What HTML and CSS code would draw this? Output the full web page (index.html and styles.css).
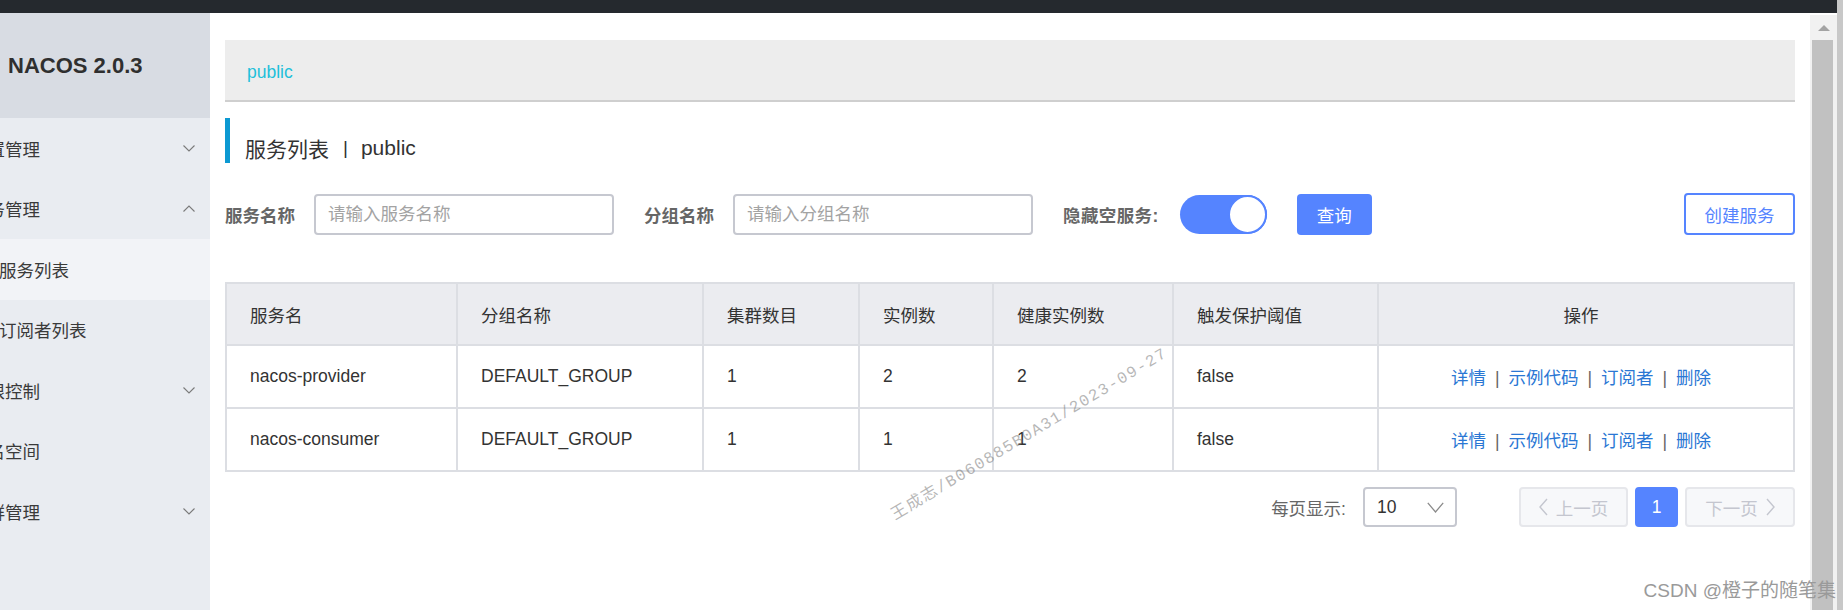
FILE: index.html
```html
<!DOCTYPE html>
<html lang="zh-CN">
<head>
<meta charset="utf-8">
<title>Nacos - 服务列表</title>
<link rel="stylesheet" href="styles.css">
</head>
<body>
<div class="window">
  <div class="topbar"></div>
  <div class="app">
    <aside class="sidebar">
      <div class="brand">NACOS 2.0.3</div>
      <nav class="menu">
        <div class="menu-item">
          <span class="menu-label">配置管理</span>
          <svg class="chev" width="12" height="7" viewBox="0 0 12 7"><polyline points="0.5,0.5 6,6 11.5,0.5"/></svg>
        </div>
        <div class="menu-item">
          <span class="menu-label">服务管理</span>
          <svg class="chev" width="12" height="7" viewBox="0 0 12 7"><polyline points="0.5,6.5 6,1 11.5,6.5"/></svg>
        </div>
        <div class="menu-item sub active">
          <span class="menu-label">服务列表</span>
        </div>
        <div class="menu-item sub">
          <span class="menu-label">订阅者列表</span>
        </div>
        <div class="menu-item">
          <span class="menu-label">权限控制</span>
          <svg class="chev" width="12" height="7" viewBox="0 0 12 7"><polyline points="0.5,0.5 6,6 11.5,0.5"/></svg>
        </div>
        <div class="menu-item">
          <span class="menu-label">命名空间</span>
        </div>
        <div class="menu-item">
          <span class="menu-label">集群管理</span>
          <svg class="chev" width="12" height="7" viewBox="0 0 12 7"><polyline points="0.5,0.5 6,6 11.5,0.5"/></svg>
        </div>
      </nav>
    </aside>

    <main class="main">
      <div class="crumb"><span class="crumb-ns">public</span></div>

      <h1 class="page-title">服务列表<span class="sep">|</span>public</h1>

      <div class="filters">
        <span class="f-label">服务名称</span>
        <input class="f-input" type="text" placeholder="请输入服务名称">
        <span class="f-label">分组名称</span>
        <input class="f-input" type="text" placeholder="请输入分组名称">
        <span class="f-label f-label-wide">隐藏空服务:</span>
        <div class="switch"><div class="knob"></div></div>
        <div class="btn-primary">查询</div>
        <div class="btn-outline">创建服务</div>
      </div>

      <table class="grid">
        <colgroup>
          <col class="c1"><col class="c2"><col class="c3"><col class="c4"><col class="c5"><col class="c6"><col class="c7">
        </colgroup>
        <thead>
          <tr>
            <th>服务名</th>
            <th>分组名称</th>
            <th>集群数目</th>
            <th>实例数</th>
            <th>健康实例数</th>
            <th>触发保护阈值</th>
            <th class="ops">操作</th>
          </tr>
        </thead>
        <tbody>
          <tr>
            <td>nacos-provider</td>
            <td>DEFAULT_GROUP</td>
            <td>1</td>
            <td>2</td>
            <td>2</td>
            <td>false</td>
            <td class="ops"><a class="op">详情</a><span class="bar">|</span><a class="op">示例代码</a><span class="bar">|</span><a class="op">订阅者</a><span class="bar">|</span><a class="op">删除</a></td>
          </tr>
          <tr>
            <td>nacos-consumer</td>
            <td>DEFAULT_GROUP</td>
            <td>1</td>
            <td>1</td>
            <td>1</td>
            <td>false</td>
            <td class="ops"><a class="op">详情</a><span class="bar">|</span><a class="op">示例代码</a><span class="bar">|</span><a class="op">订阅者</a><span class="bar">|</span><a class="op">删除</a></td>
          </tr>
        </tbody>
      </table>

      <div class="pager">
        <span class="pg-label">每页显示:</span>
        <div class="pg-select">
          <span>10</span>
          <svg class="pg-caret" width="17" height="11" viewBox="0 0 17 11"><polyline points="0.8,0.8 8.5,10 16.2,0.8"/></svg>
        </div>
        <div class="pg-btn pg-prev">
          <svg class="pg-arrow" width="9" height="18" viewBox="0 0 9 18"><polyline points="8,1 1,9 8,17"/></svg>
          <span>上一页</span>
        </div>
        <div class="pg-btn pg-cur">1</div>
        <div class="pg-btn pg-next">
          <span>下一页</span>
          <svg class="pg-arrow" width="9" height="18" viewBox="0 0 9 18"><polyline points="1,1 8,9 1,17"/></svg>
        </div>
      </div>
    </main>

    <div class="vscroll">
      <div class="vs-up"></div>
      <div class="vs-thumb"></div>
    </div>
  </div>
</div>
<div class="edge"></div>

<div class="wm-diag">王成志/B060885B0A31/2023-09-27</div>
<div class="csdn">CSDN @橙子的随笔集</div>
</body>
</html>
```

FILE: styles.css
```css
* {
  box-sizing: border-box;
}

html,
body {
  margin: 0;
  padding: 0;
}

body {
  position: relative;
  display: flex;
  width: 1843px;
  height: 610px;
  overflow: hidden;
  background: #fff;
  color: #333;
  font-family: "Liberation Sans", "Noto Sans CJK SC", sans-serif;
  font-size: 17.5px;
}

.window {
  flex: 1;
  min-width: 0;
  display: flex;
  flex-direction: column;
}

.topbar {
  flex: none;
  height: 13px;
  background: #25292e;
}

.app {
  flex: 1;
  min-height: 0;
  display: flex;
}

/* ---------- sidebar ---------- */
.sidebar {
  flex: none;
  width: 210px;
  background: #e9ecf1;
  overflow: hidden;
}

.brand {
  height: 105px;
  display: flex;
  align-items: center;
  padding-left: 8px;
  background: #d8dce3;
  color: #2f2f2f;
  font-size: 22px;
  font-weight: bold;
}

.menu {
  margin-left: -30px;
}

.menu-item {
  height: 60.5px;
  display: flex;
  align-items: center;
  justify-content: space-between;
  padding-right: 15px;
  color: #3a3a3a;
}

.menu-item.sub .menu-label {
  padding-left: 29px;
}

.menu-item.active {
  background: #f2f3f7;
}

.chev {
  display: block;
  fill: none;
  stroke: #7a7a7a;
  stroke-width: 1.1;
}

/* ---------- main ---------- */
.main {
  flex: 1;
  min-width: 0;
  padding: 27px 15px 0;
  background: #fff;
}

.crumb {
  height: 62px;
  display: flex;
  align-items: center;
  padding: 5px 0 0 22px;
  background: #ededed;
  border-bottom: 2px solid #cfcfcf;
}

.crumb-ns {
  color: #1ec0da;
}

.page-title {
  margin: 16px 0 0;
  height: 45px;
  display: flex;
  align-items: center;
  padding: 14px 0 0 15px;
  border-left: 5px solid #0c99d2;
  color: #333;
  font-size: 21px;
  font-weight: normal;
}

.page-title .sep {
  margin: 0 13px 0 14px;
  font-size: 19px;
}

.filters {
  margin-top: 30px;
  height: 42px;
  display: flex;
  align-items: center;
}

.f-label {
  margin-right: 19px;
  color: #666;
  font-weight: bold;
}

.f-label-wide {
  margin-right: 21px;
  letter-spacing: 0.4px;
}

.f-input {
  width: 300px;
  height: 41px;
  margin: 0 30px 0 0;
  padding: 0 12px;
  border: 2px solid #c6c8d0;
  border-radius: 4px;
  outline: none;
  background: #fff;
  color: #333;
  font-family: "Liberation Sans", "Noto Sans CJK SC", sans-serif;
  font-size: 17.5px;
}

.f-input::placeholder {
  color: #a3a3a3;
}

.switch {
  width: 87px;
  height: 39px;
  margin: 0 30px 0 0;
  display: flex;
  align-items: center;
  justify-content: flex-end;
  border-radius: 20px;
  background: #5584ff;
}

.knob {
  width: 39px;
  height: 39px;
  border-radius: 50%;
  border: 2px solid #5584ff;
  background: #fff;
}

.btn-primary {
  width: 75px;
  height: 41px;
  display: flex;
  align-items: center;
  justify-content: center;
  border-radius: 4px;
  background: #5584ff;
  color: #fff;
}

.btn-outline {
  margin-left: auto;
  width: 111px;
  height: 42px;
  display: flex;
  align-items: center;
  justify-content: center;
  border: 2px solid #5584ff;
  border-radius: 4px;
  background: #fff;
  color: #5584ff;
}

/* ---------- table ---------- */
.grid {
  margin-top: 47px;
  width: 100%;
  table-layout: fixed;
  border-collapse: collapse;
  border: 2px solid #dcdee3;
}

.c1 { width: 231px; }
.c2 { width: 246px; }
.c3 { width: 156px; }
.c4 { width: 134px; }
.c5 { width: 180px; }
.c6 { width: 205px; }
.c7 { width: auto; }

.grid th,
.grid td {
  padding: 0 0 0 23px;
  border: 2px solid #dcdee3;
  text-align: left;
  font-weight: normal;
  color: #333;
  white-space: nowrap;
}

.grid thead th {
  height: 62px;
  background: #ebecf0;
}

.grid tbody td {
  height: 63px;
}

.grid .ops {
  padding: 0 10px 0 0;
  text-align: center;
}

.op {
  color: #2a77d4;
  text-decoration: none;
}

.bar {
  margin: 0 9px;
  color: #666;
}

/* ---------- pager ---------- */
.pager {
  margin-top: 15px;
  height: 40px;
  display: flex;
  align-items: center;
  justify-content: flex-end;
}

.pg-label {
  margin-right: 17px;
  color: #666;
}

.pg-select {
  width: 94px;
  height: 40px;
  margin-right: 62px;
  display: flex;
  align-items: center;
  justify-content: space-between;
  padding: 0 11px 0 12px;
  border: 2px solid #c6c8d0;
  border-radius: 4px;
  color: #333;
}

.pg-caret {
  display: block;
  fill: none;
  stroke: #8a8a8a;
  stroke-width: 1.3;
}

.pg-btn {
  height: 40px;
  display: flex;
  align-items: center;
  justify-content: center;
  gap: 8px;
  border: 2px solid #e6e7eb;
  border-radius: 4px;
  background: #f7f8fa;
  color: #c4c6cf;
}

.pg-arrow {
  display: block;
  fill: none;
  stroke: #c4c6cf;
  stroke-width: 1.4;
}

.pg-prev {
  width: 109px;
}

.pg-cur {
  width: 43px;
  margin: 0 7px;
  border-color: #5584ff;
  background: #5584ff;
  color: #fff;
}

.pg-next {
  width: 110px;
}

/* ---------- scrollbar + window edge ---------- */
.vscroll {
  flex: none;
  width: 27px;
  margin-top: 2px;
  padding-left: 2px;
  display: flex;
  flex-direction: column;
  background: #f1f1f1;
}

.vs-up {
  margin: 10px 0 0 6px;
  width: 0;
  height: 0;
  border-left: 6px solid transparent;
  border-right: 6px solid transparent;
  border-bottom: 6px solid #a3a3a3;
}

.vs-thumb {
  flex: 1;
  margin-top: 9px;
  width: 21px;
  background: #c1c1c1;
}

.edge {
  flex: none;
  width: 6px;
  background: #c8c8c8;
}

/* ---------- overlays (watermarks) ---------- */
.wm-diag {
  position: absolute;
  left: 1028px;
  top: 432px;
  transform: translate(-50%, -50%) rotate(-31deg);
  white-space: nowrap;
  color: rgba(110, 110, 110, 0.5);
  font-family: "Liberation Mono", "Noto Sans CJK SC", monospace;
  font-size: 16px;
  letter-spacing: 1.5px;
  pointer-events: none;
}

.csdn {
  position: absolute;
  right: 7px;
  top: 575px;
  color: #9a9a9a;
  font-family: "Liberation Sans", "Noto Sans CJK SC", sans-serif;
  font-size: 19px;
  white-space: nowrap;
  pointer-events: none;
}
```
